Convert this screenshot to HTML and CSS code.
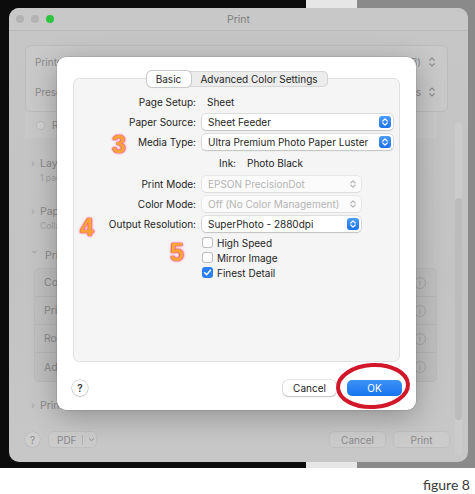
FILE: index.html
```html
<!DOCTYPE html>
<html lang="en">
<head>
<meta charset="utf-8">
<title>Print – Basic</title>
<link rel="stylesheet" href="styles.css">
</head>
<body>
<div class="shot">
  <div class="window">
    <div class="titlebar">
      <div class="lights"><span class="light"></span><span class="light"></span><span class="light green"></span></div>
      <div class="title">Print</div>
      <div></div>
    </div>
    <div class="winbody">
      <div class="pbox">
        <div class="prow"><span>Printer</span><span class="pval">EPSON SC-P900 Series (USB)<svg class="updown" viewBox="0 0 8 12" width="8" height="12"><path d="M1.5 4.5 L4 2 L6.5 4.5 M1.5 7.5 L4 10 L6.5 7.5" fill="none" stroke="#8a8a8a" stroke-width="1.1"/></svg></span></div>
        <div class="prow"><span>Presets</span><span class="pval">Default Settings<svg class="updown" viewBox="0 0 8 12" width="8" height="12"><path d="M1.5 4.5 L4 2 L6.5 4.5 M1.5 7.5 L4 10 L6.5 7.5" fill="none" stroke="#8a8a8a" stroke-width="1.1"/></svg></span></div>
      </div>
      <div class="radio-row"><span class="radio"></span><span>Record Settings</span></div>
      <div class="sect s-layout">
        <div class="sect-title"><span class="chev">›</span>Layout</div>
        <div class="sect-sub">1 page per sheet</div>
      </div>
      <div class="sect s-paper">
        <div class="sect-title"><span class="chev">›</span>Paper</div>
        <div class="sect-sub">Collated</div>
      </div>
      <div class="sect s-print">
        <div class="sect-title"><span class="chev down">›</span>Printer Options</div>
      </div>
      <div class="optbox">
        <div class="orow"><span>Color Matching</span><span class="info">i</span></div>
        <div class="orow"><span>Print Settings</span><span class="info">i</span></div>
        <div class="orow"><span>Roll Paper</span><span class="info">i</span></div>
        <div class="orow"><span>Advanced Media Control</span><span class="info">i</span></div>
      </div>
      <div class="sect s-last">
        <div class="sect-title"><span class="chev">›</span>Printer Info</div>
      </div>
    </div>
    <div class="winfooter">
      <span class="wq">?</span>
      <span class="pdf">PDF<span class="pdf-sep"></span><svg viewBox="0 0 8 6" width="7" height="5"><path d="M1 1.5 L4 4.5 L7 1.5" fill="none" stroke="#8a8a8a" stroke-width="1.1"/></svg></span>
      <span class="grow"></span>
      <span class="wbtn">Cancel</span>
      <span class="wbtn">Print</span>
    </div>
    <div class="scroll"><div class="thumb"></div></div>

    <div class="sheet">
      <div class="tabs">
        <span class="tab sel">Basic</span>
        <span class="tab other">Advanced Color Settings</span>
      </div>
      <div class="panel">
        <div class="row"><span class="lbl"><span>Page Setup:</span></span><span class="val">Sheet</span></div>
        <div class="row"><span class="lbl"><span>Paper Source:</span></span>
          <span class="popup wide"><span>Sheet Feeder</span><span class="stepper"><svg viewBox="0 0 12 12" width="12" height="12"><path d="M3.8 5 L6 2.9 L8.2 5 M3.8 7 L6 9.1 L8.2 7" fill="none" stroke="#fff" stroke-width="1.2" stroke-linecap="round" stroke-linejoin="round"/></svg></span></span></div>
        <div class="row"><span class="lbl"><span>Media Type:</span></span>
          <span class="popup wide"><span>Ultra Premium Photo Paper Luster</span><span class="stepper"><svg viewBox="0 0 12 12" width="12" height="12"><path d="M3.8 5 L6 2.9 L8.2 5 M3.8 7 L6 9.1 L8.2 7" fill="none" stroke="#fff" stroke-width="1.2" stroke-linecap="round" stroke-linejoin="round"/></svg></span></span></div>
        <div class="row ink"><span class="lbl"><span>Ink:</span></span><span class="val">Photo Black</span></div>
        <div class="row"><span class="lbl"><span>Print Mode:</span></span>
          <span class="popup mid off"><span>EPSON PrecisionDot</span><span class="stepper gray"><svg viewBox="0 0 12 12" width="12" height="12"><path d="M3.8 5 L6 2.9 L8.2 5 M3.8 7 L6 9.1 L8.2 7" fill="none" stroke="#b4b4b4" stroke-width="1.1" stroke-linecap="round" stroke-linejoin="round"/></svg></span></span></div>
        <div class="row"><span class="lbl"><span>Color Mode:</span></span>
          <span class="popup mid off"><span>Off (No Color Management)</span><span class="stepper gray"><svg viewBox="0 0 12 12" width="12" height="12"><path d="M3.8 5 L6 2.9 L8.2 5 M3.8 7 L6 9.1 L8.2 7" fill="none" stroke="#b4b4b4" stroke-width="1.1" stroke-linecap="round" stroke-linejoin="round"/></svg></span></span></div>
        <div class="row"><span class="lbl"><span>Output Resolution:</span></span>
          <span class="popup mid"><span>SuperPhoto - 2880dpi</span><span class="stepper"><svg viewBox="0 0 12 12" width="12" height="12"><path d="M3.8 5 L6 2.9 L8.2 5 M3.8 7 L6 9.1 L8.2 7" fill="none" stroke="#fff" stroke-width="1.2" stroke-linecap="round" stroke-linejoin="round"/></svg></span></span></div>
        <div class="checks">
          <div class="check"><span class="cb"></span><span>High Speed</span></div>
          <div class="check"><span class="cb"></span><span>Mirror Image</span></div>
          <div class="check"><span class="cb on"><svg viewBox="0 0 11 11" width="11" height="11"><path d="M2.6 5.7 L4.6 7.8 L8.4 3.2" fill="none" stroke="#fff" stroke-width="1.5" stroke-linecap="round" stroke-linejoin="round"/></svg></span><span>Finest Detail</span></div>
        </div>
      </div>
      <div class="sheet-foot">
        <span class="help">?</span>
        <span class="grow"></span>
        <span class="btn cancel">Cancel</span>
        <span class="btn ok">OK</span>
      </div>
      <span class="num n3">3</span>
      <span class="num n4">4</span>
      <span class="num n5">5</span>
      <svg class="circle" viewBox="0 0 78 50" width="78" height="50"><ellipse cx="39" cy="25" rx="35" ry="21" fill="none" stroke="#d3172b" stroke-width="4" transform="rotate(-3 39 25)"/></svg>
    </div>
  </div>
</div>
<div class="caption">figure 8</div>
</body>
</html>
```

FILE: styles.css
```css
* { box-sizing: border-box; }
html, body { margin: 0; padding: 0; }
body { background: #fff; font-family: Inter, "Liberation Sans", sans-serif; width: 475px; height: 494px; overflow: hidden; }

.shot {
  width: 475px; height: 468px;
  padding: 8px 7px 6px 9px;
  background: linear-gradient(to right, #0c0c0c 0 306px, #e6e6e6 306px 357px, #8a8a8a 357px 100%);
}
.window {
  position: relative;
  width: 459px; height: 454px;
  border-radius: 10px;
  background: linear-gradient(#c6c6c6, #c3c3c3 60%, #c7c7c7);
  overflow: hidden;
  display: flex; flex-direction: column;
  color: #8a8a8a;
  font-size: 10px;
}
.titlebar {
  flex: none; height: 23px;
  display: grid; grid-template-columns: 1fr auto 1fr; align-items: center;
  border-bottom: 1px solid #b9b9b9;
  background: #c8c8c8;
}
.lights { display: flex; gap: 7px; padding-left: 7px; }
.light { width: 8px; height: 8px; border-radius: 50%; background: #b3b3b3; }
.light.green { background: #2dc43e; }
.title { font-size: 10.5px; color: #7e7e7e; }

.winbody { flex: 1; padding: 14px 0 0 16px; display: flex; flex-direction: column; }
.pbox {
  width: 423px; height: 67px;
  border: 1px solid #bcbcbc; border-radius: 6px;
  background: #c9c9c9;
  padding-top: 1px;
}
.prow { height: 30px; display: flex; align-items: center; justify-content: space-between; padding: 0 11px 0 9px; }
.pval { display: flex; align-items: center; gap: 7px; }
.radio-row { height: 26px; width: 412px; display: flex; align-items: center; gap: 7px; padding-left: 11px; background: #c8c8c8; }
.radio { width: 9px; height: 9px; border-radius: 50%; background: #d2d2d2; box-shadow: inset 0 0 0 1px #b8b8b8; }
.sect-title { height: 16px; display: flex; align-items: center; font-size: 10.5px; }
.chev { width: 15px; padding-left: 6px; font-size: 10px; color: #a0a0a0; }
.chev.down { display: inline-block; transform: rotate(90deg); width: 10px; padding: 0; margin: 0 5px 0 5px; }
.sect-sub { height: 14px; padding-left: 15px; font-size: 8.5px; color: #a2a2a2; display: flex; align-items: center; }
.s-layout { margin-top: 17px; }
.s-paper { margin-top: 18px; }
.s-print { margin-top: 14px; }
.optbox {
  margin: 5px 0 0 9px; width: 403px;
  border-radius: 5px; background: #bfbfbf;
  border: 1px solid #bababa;
}
.orow { height: 28px; display: flex; align-items: center; justify-content: space-between; padding: 0 10px 0 9px; border-bottom: 1px solid #b6b6b6; font-size: 10.5px; }
.orow:last-child { border-bottom: 0; }
.info { width: 12px; height: 12px; border-radius: 50%; border: 1px solid #a8a8a8; font-size: 8px; display: flex; align-items: center; justify-content: center; color: #9c9c9c; }
.s-last { margin-top: 15px; }

.winfooter { flex: none; height: 30px; padding: 0 19px 15px 16px; display: flex; align-items: center; gap: 9px; }
.grow { flex: 1; }
.wq { width: 15px; height: 15px; border-radius: 50%; background: #cdcdcd; box-shadow: 0 0 0 0.5px #b5b5b5; display: flex; align-items: center; justify-content: center; font-size: 10px; }
.pdf { width: 47px; height: 15px; border-radius: 4px; background: #cbcbcb; box-shadow: 0 0 0 0.5px #b8b8b8; display: flex; align-items: center; padding-left: 8px; gap: 5px; font-size: 10px; }
.pdf-sep { width: 1px; height: 10px; background: #b3b3b3; }
.wbtn { width: 55px; height: 15px; border-radius: 4px; background: #cbcbcb; box-shadow: 0 0 0 0.5px #b8b8b8; display: flex; align-items: center; justify-content: center; font-size: 10px; }

.scroll { position: absolute; left: 446px; top: 114px; width: 7px; height: 333px; background: #cbcbcb; border-radius: 4px; }
.thumb { margin-top: 76px; height: 222px; width: 7px; border-radius: 4px; background: #bcbcbc; }

/* sheet */
.sheet {
  position: absolute; left: 48px; top: 49px;
  width: 359px; height: 353px;
  background: #fff; border-radius: 9px;
  box-shadow: 0 6px 28px rgba(0,0,0,.28), 0 0 0 0.5px rgba(0,0,0,.15);
  padding-top: 14px;
  display: flex; flex-direction: column;
  color: #242424;
  font-size: 10px;
}
.tabs {
  position: relative; z-index: 1;
  align-self: center;
  display: flex; height: 16px;
  background: #ececec; border-radius: 5px;
  box-shadow: inset 0 0 0 1px #d6d6d6;
  margin-left: 1px;
}
.tab { display: flex; align-items: center; justify-content: center; font-size: 10px; color: #262626; }
.tab.sel { width: 44px; background: #fff; border-radius: 5px; box-shadow: 0 0 0 1px #c9c9c9, 0 1px 1px rgba(0,0,0,.08); }
.tab.other { width: 137px; }
.panel {
  margin: -9px 16px 0 16px; height: 284px;
  background: #f5f5f5; border: 1px solid #e1e1e1; border-radius: 6px;
  padding-top: 13px;
}
.row { height: 20px; display: flex; align-items: center; gap: 6px; }
.lbl { width: 122px; flex: none; display: flex; justify-content: flex-end; }
.val { padding-left: 5px; }
.row.ink { height: 22px; gap: 11px; }
.row.ink .lbl { width: 162px; }
.row.ink .val { padding-left: 0; }
.popup {
  height: 16px; display: flex; align-items: center; justify-content: space-between;
  background: #fff; border-radius: 4px;
  box-shadow: 0 0 0 0.5px rgba(0,0,0,.2), 0 1px 1.5px rgba(0,0,0,.12);
  padding: 0 2px 0 6px;
}
.popup.wide { width: 191px; }
.popup.mid { width: 159px; }
.popup.off { color: #b4b4b4; background: #fbfbfb; box-shadow: 0 0 0 0.5px rgba(0,0,0,.1), 0 1px 1px rgba(0,0,0,.05); }
.stepper { width: 12px; height: 12px; border-radius: 3px; background: linear-gradient(#4b9cfc, #1a73ea); display: flex; }
.stepper.gray { background: none; }
.checks { margin-top: 1px; padding-left: 128px; }
.check { height: 15px; display: flex; align-items: center; gap: 4px; }
.cb { width: 11px; height: 11px; border-radius: 3px; background: #fff; box-shadow: inset 0 0 0 1px #bdbdbd; display: flex; }
.cb.on { background: #2a7ff6; box-shadow: none; }

.sheet-foot { margin-top: 18px; height: 16px; display: flex; align-items: center; gap: 11px; padding: 0 14px 0 15px; }
.help { width: 16px; height: 16px; border-radius: 50%; background: #fff; box-shadow: 0 0 0 0.5px rgba(0,0,0,.25), 0 1px 1.5px rgba(0,0,0,.15); display: flex; align-items: center; justify-content: center; font-size: 10px; font-weight: 600; color: #333; }
.btn { height: 16px; border-radius: 5px; display: flex; align-items: center; justify-content: center; font-size: 10px; }
.btn.cancel { width: 53px; background: #fff; box-shadow: 0 0 0 0.5px rgba(0,0,0,.22), 0 1px 1.5px rgba(0,0,0,.15); color: #222; }
.btn.ok { width: 55px; background: linear-gradient(#3d93f9, #1874ed); color: #fff; }

.num {
  position: absolute;
  font-family: "Liberation Sans", sans-serif; font-weight: 700; font-size: 25px; line-height: 25px;
  color: #f9a436;
  text-shadow: 0 0 1px #e8407c, 0 0 1px #e8407c, 0 0 2px #ff5f8f, 0 0 3px rgba(255,120,160,.7);
}
.n3 { left: 55px; top: 75px; }
.n4 { left: 23px; top: 158px; }
.n5 { left: 113px; top: 183px; }
.circle { position: absolute; left: 277px; top: 304px; }

.caption { text-align: right; padding-right: 5px; margin-top: 8px; font-family: Lato, "Liberation Sans", sans-serif; font-size: 14px; color: #3a3a3a; }
```
